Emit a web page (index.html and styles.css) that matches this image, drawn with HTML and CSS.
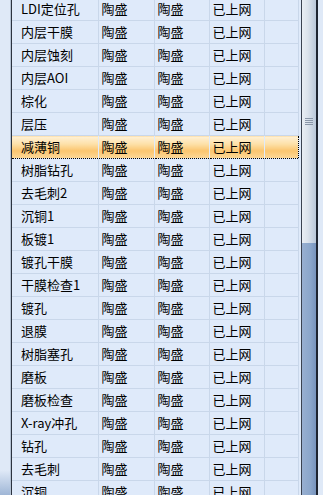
FILE: index.html
```html
<!DOCTYPE html>
<html>
<head>
<meta charset="utf-8">
<link rel="stylesheet" href="styles.css">
</head>
<body>
<div class="frame">
  <div class="side-left"></div>
  <div class="grid-wrap">
    <table class="grid">
      <colgroup><col class="c1"><col class="c2"><col class="c3"><col class="c4"><col class="c5"></colgroup>
      <tbody>
        <tr><td>LDI定位孔</td><td>陶盛</td><td>陶盛</td><td>已上网</td><td></td></tr>
        <tr><td>内层干膜</td><td>陶盛</td><td>陶盛</td><td>已上网</td><td></td></tr>
        <tr><td>内层蚀刻</td><td>陶盛</td><td>陶盛</td><td>已上网</td><td></td></tr>
        <tr><td>内层AOI</td><td>陶盛</td><td>陶盛</td><td>已上网</td><td></td></tr>
        <tr><td>棕化</td><td>陶盛</td><td>陶盛</td><td>已上网</td><td></td></tr>
        <tr><td>层压</td><td>陶盛</td><td>陶盛</td><td>已上网</td><td></td></tr>
        <tr class="sel"><td>减薄铜</td><td>陶盛</td><td>陶盛</td><td>已上网</td><td></td></tr>
        <tr><td>树脂钻孔</td><td>陶盛</td><td>陶盛</td><td>已上网</td><td></td></tr>
        <tr><td>去毛刺2</td><td>陶盛</td><td>陶盛</td><td>已上网</td><td></td></tr>
        <tr><td>沉铜1</td><td>陶盛</td><td>陶盛</td><td>已上网</td><td></td></tr>
        <tr><td>板镀1</td><td>陶盛</td><td>陶盛</td><td>已上网</td><td></td></tr>
        <tr><td>镀孔干膜</td><td>陶盛</td><td>陶盛</td><td>已上网</td><td></td></tr>
        <tr><td>干膜检查1</td><td>陶盛</td><td>陶盛</td><td>已上网</td><td></td></tr>
        <tr><td>镀孔</td><td>陶盛</td><td>陶盛</td><td>已上网</td><td></td></tr>
        <tr><td>退膜</td><td>陶盛</td><td>陶盛</td><td>已上网</td><td></td></tr>
        <tr><td>树脂塞孔</td><td>陶盛</td><td>陶盛</td><td>已上网</td><td></td></tr>
        <tr><td>磨板</td><td>陶盛</td><td>陶盛</td><td>已上网</td><td></td></tr>
        <tr><td>磨板检查</td><td>陶盛</td><td>陶盛</td><td>已上网</td><td></td></tr>
        <tr><td>X-ray冲孔</td><td>陶盛</td><td>陶盛</td><td>已上网</td><td></td></tr>
        <tr><td>钻孔</td><td>陶盛</td><td>陶盛</td><td>已上网</td><td></td></tr>
        <tr><td>去毛刺</td><td>陶盛</td><td>陶盛</td><td>已上网</td><td></td></tr>
        <tr><td>沉铜</td><td>陶盛</td><td>陶盛</td><td>已上网</td><td></td></tr>
      </tbody>
    </table>
  </div>
  <div class="gap"></div>
  <div class="scrollbar">
    <div class="thumb"><div class="grip"><span></span><span></span><span></span><span></span></div></div>
    <div class="track"></div>
  </div>
  <div class="side-right"></div>
</div>
</body>
</html>
```

FILE: styles.css
```css
html, body {
  margin: 0;
  padding: 0;
  background: #dde8f6;
}
.frame {
  display: flex;
  width: 323px;
  height: 495px;
  overflow: hidden;
  font-family: "Noto Sans CJK SC", sans-serif;
  font-size: 13px;
  color: #000;
}
.side-left {
  width: 10px;
  flex: none;
  background: linear-gradient(to bottom, #dfe9f7 0%, #dfe9f7 95%, #9fb6d6 100%);
  border-right: 1px solid #b4c2d4;
}
.grid-wrap {
  width: 287px;
  flex: none;
  border-left: 1px solid #2c3340;
  overflow: hidden;
  background: #dfeafa;
}
.grid {
  border-collapse: collapse;
  table-layout: fixed;
  width: 286px;
  margin-top: -2px;
}
.c1 { width: 86px; }
.c2 { width: 56px; }
.c3 { width: 55px; }
.c4 { width: 55px; }
.c5 { width: 34px; }
.grid td {
  height: 22px;
  padding: 0 0 0 3px;
  border-right: 1px solid #c9d7ea;
  border-bottom: 1px solid #c9d7ea;
  background: #dfeafa;
  white-space: nowrap;
  overflow: hidden;
  line-height: 22px;
  box-sizing: border-box;
}
.grid td:first-child {
  padding-left: 9px;
}
.grid tr.sel td {
  background: linear-gradient(to bottom, #fff1d6 0%, #fde0a8 35%, #fbc56f 65%, #fcd898 100%);
  border-top: 1px dotted #000;
  border-bottom: 1px dotted #000;
  border-right-color: transparent;
}
.grid tr.sel td:last-child {
  border-right: 1px dotted #000;
}
.gap {
  width: 2px;
  flex: none;
  background: #dfeafa;
}
.scrollbar {
  width: 14px;
  flex: none;
  display: flex;
  flex-direction: column;
  border-left: 1px solid #3b4250;
  border-right: 2px solid #1e2430;
}
.thumb {
  height: 243px;
  flex: none;
  background: linear-gradient(to right, #e9eef4 0%, #dce3ec 40%, #b9c7d9 100%);
  display: flex;
  align-items: center;
  justify-content: center;
}
.grip {
  display: flex;
  flex-direction: column;
  gap: 1px;
  width: 8px;
}
.grip span {
  height: 1px;
  background: #8a96a8;
}
.track {
  flex: 1;
  background: linear-gradient(to right, #98afd0 0%, #8ba6cb 60%, #7894bd 100%);
}
.side-right {
  flex: 1;
  background: #dfe9f7;
}
```
